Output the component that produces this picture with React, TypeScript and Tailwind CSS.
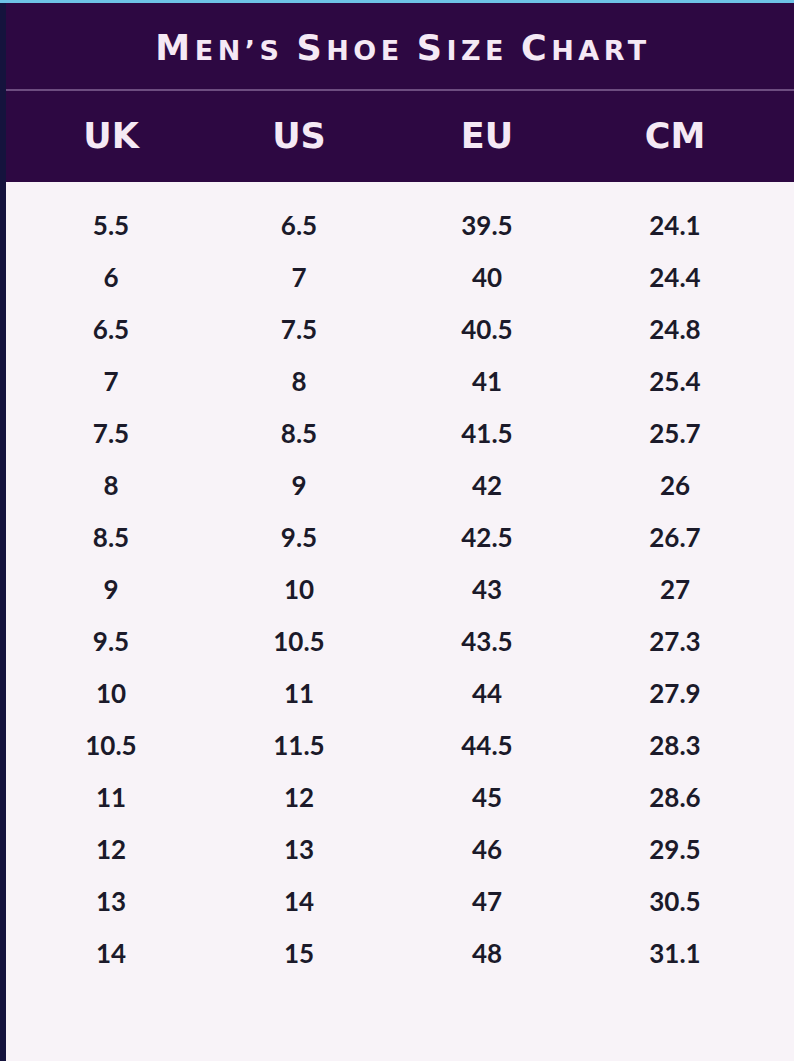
const rows: [string, string, string, string][] = [
  ["5.5", "6.5", "39.5", "24.1"],
  ["6", "7", "40", "24.4"],
  ["6.5", "7.5", "40.5", "24.8"],
  ["7", "8", "41", "25.4"],
  ["7.5", "8.5", "41.5", "25.7"],
  ["8", "9", "42", "26"],
  ["8.5", "9.5", "42.5", "26.7"],
  ["9", "10", "43", "27"],
  ["9.5", "10.5", "43.5", "27.3"],
  ["10", "11", "44", "27.9"],
  ["10.5", "11.5", "44.5", "28.3"],
  ["11", "12", "45", "28.6"],
  ["12", "13", "46", "29.5"],
  ["13", "14", "47", "30.5"],
  ["14", "15", "48", "31.1"],
];

const headers = ["UK", "US", "EU", "CM"];

// title words, first letter drawn large, rest as small caps
const titleWords = ["Men’s", "Shoe", "Size", "Chart"];

export default function App() {
  return (
    <div className="flex h-[1061px] w-[794px] flex-col overflow-hidden bg-[#f8f3f8]">
      {/* top accent line */}
      <div className="h-[3px] bg-[#6ec3e6]" />

      <div className="flex flex-1">
        {/* left edge strip */}
        <div className="w-[6px] bg-[#15133d]" />

        <div className="flex flex-1 flex-col">
          {/* ── Header ───────────────────────── */}
          <div className="bg-[#2d0842] text-[#f5e9f5] font-['DejaVu_Sans',sans-serif] font-bold">
            <div className="flex h-[86px] items-center justify-center pt-[4px] pl-[6px]">
              <h1 className="flex items-baseline gap-[13px] uppercase tracking-[4.5px]">
                {titleWords.map((w) => (
                  <span key={w}>
                    <span className="text-[35px]">{w[0]}</span>
                    <span className="text-[27px]">{w.slice(1)}</span>
                  </span>
                ))}
              </h1>
            </div>
            <div className="h-[2px] bg-[#6d4d80]" />
            <div className="grid h-[91px] grid-cols-[repeat(4,188px)] items-center pl-[11px]">
              {headers.map((h) => (
                <span key={h} className="text-center text-[35px]">
                  {h}
                </span>
              ))}
            </div>
          </div>

          {/* ── Size rows ────────────────────── */}
          <div className="flex flex-col pt-[17px] font-['Lato',sans-serif] font-bold text-[26px] text-[#1b1a2a]">
            {rows.map((r) => (
              <div
                key={r[0]}
                className="grid h-[52px] grid-cols-[repeat(4,188px)] items-center pl-[11px]"
              >
                {r.map((v, i) => (
                  <span key={i} className="text-center">
                    {v}
                  </span>
                ))}
              </div>
            ))}
          </div>
        </div>
      </div>
    </div>
  );
}
